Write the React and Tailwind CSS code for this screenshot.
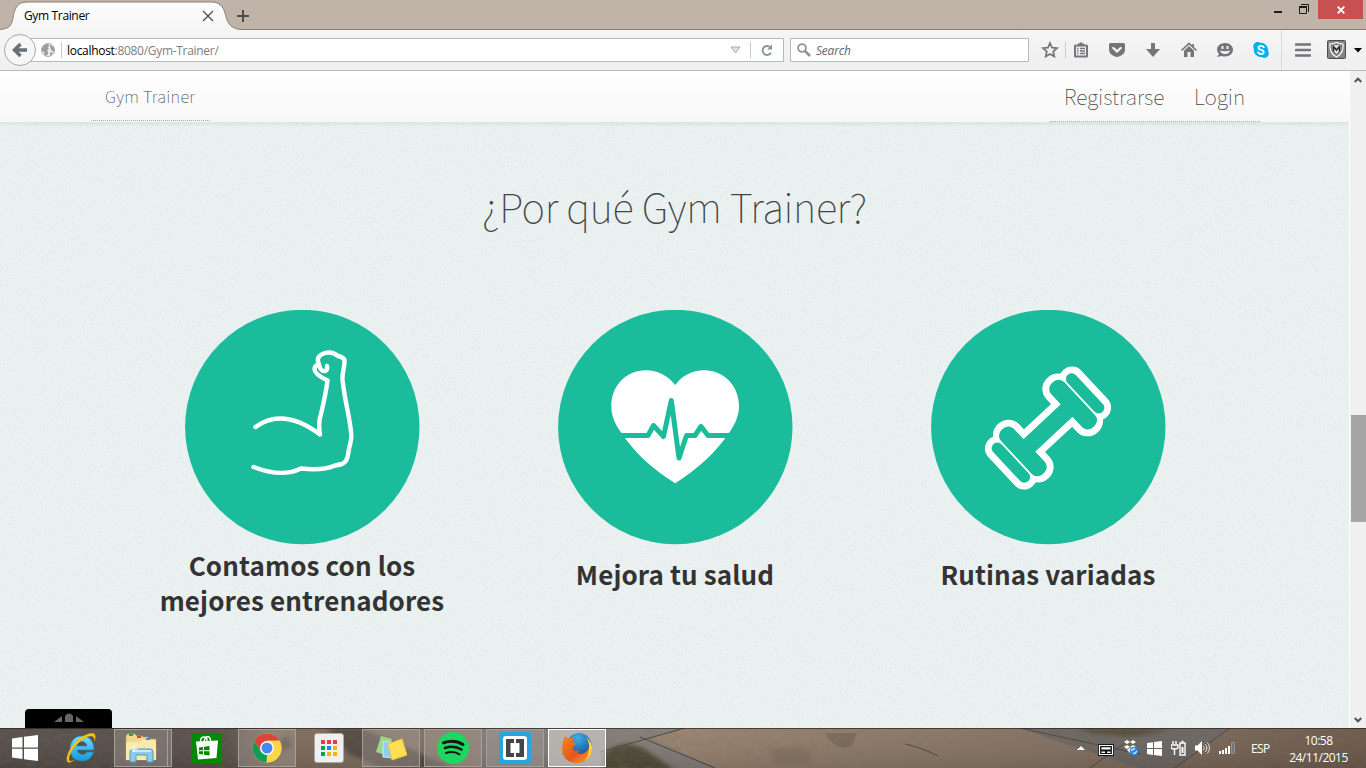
import React from "react";

const ui = "font-['Open_Sans','Noto_Sans',sans-serif]";
const body = "font-['Noto_Sans_CJK_SC','Source_Sans_Pro',sans-serif]";

function TitleBar() {
  return (
    <header className="relative flex h-[30px] shrink-0 items-start justify-between bg-[#c0b3a7] shadow-[inset_0_-1px_0_#857b73]">
      <div className="relative flex h-[30px] w-[260px] items-center">
        <svg className="absolute left-0 top-0" width="242" height="30" viewBox="0 0 242 30">
          <defs>
            <linearGradient id="tab" x1="0" y1="0" x2="0" y2="1">
              <stop offset="0" stopColor="#fdfdfd" />
              <stop offset="1" stopColor="#f5f5f5" />
            </linearGradient>
          </defs>
          <path d="M0 29.5C14 28.5 12 20 14 13C16 5 20 2 28 2H211C219 2 223 6 225 13C227 20 228 28.500 241 29.500V30H0Z" fill="url(#tab)" />
          <path d="M0 29.500C14 28.500 12 20 14 13C16 5 20 2 28 2H211C219 2 223 6 225 13C227 20 228 28.500 241 29.500" fill="none" stroke="#8a8179" />
        </svg>
        <span className={`relative ml-6 mt-[2px] w-[178px] whitespace-nowrap text-[12px] leading-4 tracking-[-0.35px] text-black ${ui}`}>Gym Trainer</span>
        <svg className="relative mt-[2px]" width="12" height="12" viewBox="0 0 12 12"><path d="M1 1L11 11M11 1L1 11" stroke="#4c4c4c" strokeWidth="1.300" /></svg>
        <svg className="relative ml-[23px] mt-[2px] shrink-0" width="12" height="12" viewBox="0 0 12 12"><path d="M6 0V12M0 6H12" stroke="#4c4c4c" strokeWidth="1.900" /></svg>
      </div>
      <div className="flex items-start">
        <svg width="44" height="20" viewBox="0 0 44 20">
          <path d="M0 11H8V13H0Z" fill="#1c1c1c" />
          <path d="M25.500 6.500H32.500V13.500H25.500ZM27 4.500H34.500V12" fill="none" stroke="#1c1c1c" />
          <path d="M25 7H33" stroke="#1c1c1c" strokeWidth="2" />
        </svg>
        <div className="mr-[3px] flex h-[19px] w-[45px] items-center justify-center bg-[#c75050]">
          <svg width="8" height="8" viewBox="0 0 8 8"><path d="M.7.7L7.300 7.300M7.300.7L.7 7.300" stroke="#fff" strokeWidth="1.900" /></svg>
        </div>
      </div>
    </header>
  );
}

const g = "#72767a";
const toolIcons = [
  <svg key="star" width="18" height="18" viewBox="0 0 18 18"><path d="M9 2L11 6.700L16 7.200L12.200 10.500L13.300 15.500L9 13L4.700 15.500L5.800 10.500L2 7.200L7 6.700Z" fill="none" stroke={g} strokeWidth="1.700" /></svg>,
  <svg key="list" width="18" height="18" viewBox="0 0 18 18"><path d="M3.500 4.500H14.500Q15 4.500 15 5V15Q15 15.500 14.500 15.500H3.500Q3 15.500 3 15V5Q3 4.500 3.500 4.500Z" fill="none" stroke={g} strokeWidth="2" /><path d="M6 4V2.500H7.500L8 1.500H10L10.500 2.500H12V4Z" fill={g} /><path d="M5 7.500H6.500M8 7.500H13M5 10H6.500M8 10H13M5 12.500H6.500M8 12.500H13" stroke={g} strokeWidth="1.400" /></svg>,
  <svg key="pocket" width="18" height="18" viewBox="0 0 18 18"><path d="M2.500 2H15.500Q17 2 17 3.500V8Q17 12 14 14T9 16Q7 16 4 14T1 8V3.500Q1 2 2.500 2Z" fill={g} /><path d="M5.300 7L9 10.400L12.700 7" fill="none" stroke="#f4f4f4" strokeWidth="2.300" strokeLinecap="round" /></svg>,
  <svg key="down" width="18" height="18" viewBox="0 0 18 18"><path d="M7 2H11V8H16L9 16L2 8H7Z" fill={g} /></svg>,
  <svg key="home" width="18" height="18" viewBox="0 0 18 18"><path d="M1.500 9.500L9 2.500L16.500 9.500M13 3V6" fill="none" stroke={g} strokeWidth="1.700" /><path d="M4 9.700L9 5L14 9.700V16H10.500V11H7.500V16H4Z" fill={g} /></svg>,
  <svg key="chat" width="18" height="18" viewBox="0 0 18 18"><path d="M9 2C13.500 2 17 4.800 17 8.800S13.500 15.500 9 15.500Q7 15.500 5.500 15L1 16L3 13Q1 11 1 8.800C1 4.800 4.500 2 9 2Z" fill={g} /><path d="M6.500 5V8M11.500 5V8" stroke="#f3f3f3" strokeWidth="1.900" /><path d="M4 9.500Q9 11 14 9.500Q13 13 9 13T4 9.500Z" fill="#f3f3f3" /></svg>,
  <svg key="skype" width="18" height="18" viewBox="0 0 18 18"><circle cx="9" cy="9" r="7.200" fill="#00aff0" /><circle cx="5.600" cy="5.500" r="4.400" fill="#00aff0" /><circle cx="12.400" cy="12.500" r="4.400" fill="#00aff0" /><path d="M11.800 6.300Q11 4.900 9 4.900Q6.500 4.900 6.500 6.700Q6.500 8.300 9 8.800T11.800 11Q11.800 13 9 13Q6.900 13 6.100 11.400" fill="none" stroke="#fff" strokeWidth="1.800" strokeLinecap="round" /></svg>,
];

function ToolBar() {
  return (
    <div className="flex h-[41px] shrink-0 items-center border-b border-[#b9b9b9] bg-linear-to-b from-[#f5f5f5] to-[#efefef]">
      <div className="relative z-10 ml-1 flex size-8 shrink-0 items-center justify-center rounded-full border border-[#a8a8a8] bg-[#f7f7f7]">
        <svg width="16" height="16" viewBox="0 0 16 16"><path d="M8.500 2L2.500 8L8.500 14M3 8H15" fill="none" stroke="#6b7075" strokeWidth="3.500" /></svg>
      </div>
      <div className="-ml-[6px] flex h-6 w-[754px] shrink-0 items-center border border-[#b1bcc8] bg-white">
        <svg className="ml-[10px]" width="14" height="14" viewBox="0 0 14 14"><circle cx="7" cy="7" r="6.500" fill="#f1f1f1" stroke="#a9a9a9" /><path d="M1 5Q3 1 7 1L8.500 3L6.500 4.500L8 6L6 7.500L7.500 10L5.500 13L3 11L3.500 9L1 8ZM9 1.500L13 4.500V9L11 8L9.500 5.500ZM9 9L12 10L9 13Z" fill="#9c9c9c" /></svg>
        <span className="ml-[6px] h-4 w-px bg-[#c9c9c9]" />
        <span className={`ml-[5px] mt-[2px] grow whitespace-nowrap text-[12px] leading-4 tracking-[-0.3px] text-[#7e7e7e] ${ui}`}><span className="text-black">localhost</span>:8080/Gym-Trainer/</span>
        <svg className="mr-px" width="11" height="8" viewBox="0 0 11 8"><path d="M1 1H10L5.500 7Z" fill="#dde3e9" stroke="#a1abb5" /></svg>
        <span className="ml-2 h-4 w-px bg-[#c9c9c9]" />
        <svg className="ml-[9px] mr-[9px]" width="14" height="14" viewBox="0 0 14 14"><path d="M11 9.700A4.500 4.500 0 1 1 10.200 4.200" fill="none" stroke="#8695a4" strokeWidth="1.900" /><path d="M7.200 6.500H12V1.500Z" fill="#8695a4" /></svg>
      </div>
      <div className="ml-[6px] flex h-6 w-[239px] shrink-0 items-center border border-[#b1bcc8] bg-white">
        <svg className="ml-[6px]" width="14" height="14" viewBox="0 0 14 14"><circle cx="5" cy="5" r="3.900" fill="none" stroke="#929292" strokeWidth="1.800" /><path d="M8 8L13 13" stroke="#929292" strokeWidth="2.500" /></svg>
        <span className={`ml-[5px] mt-[2px] text-[12px] italic leading-4 tracking-[-0.2px] text-[#666] ${ui}`}>Search</span>
      </div>
      <div className="ml-3 flex items-center">
        {toolIcons[0]}
        <span className="mx-[6px] h-4 w-px bg-[#c9c9c9]" />
        <div className="flex items-center gap-[18px]">{toolIcons.slice(1)}</div>
      </div>
      <span className="ml-[11px] h-[38px] w-px bg-[#dadada]" />
      <svg className="ml-[13px]" width="16" height="14" viewBox="0 0 16 14"><path d="M1 1.500H15M1 7H15M1 12.500H15" stroke={g} strokeWidth="2.700" strokeLinecap="round" /></svg>
      <svg className="ml-4" width="20" height="20" viewBox="0 0 20 20"><rect x=".5" y=".5" width="18" height="18" rx="1" fill="#858585" stroke="#4e4e4e" /><path d="M3 4Q6.500 4 9.500 2.500Q12.500 4 16 4Q17 13 9.500 17Q2 13 3 4Z" fill="#777" stroke="#fff" strokeWidth="1.200" /><path d="M5.500 5H13.500V10L9.500 14L5.500 10Z" fill="#ddd" /><path d="M6.500 11.500V6.500L9.500 10L12.500 6.500V11.500" fill="none" stroke="#2a2a2a" strokeWidth="1.500" /></svg>
      <svg className="ml-[7px]" width="8" height="5" viewBox="0 0 8 5"><path d="M0 0H8L4 4.500Z" fill="#000" /></svg>
    </div>
  );
}

function Paper() {
  return (
    <svg className="absolute inset-0" width="1349" height="657">
      <filter id="paper" x="0" y="0" width="100%" height="100%">
        <feTurbulence type="fractalNoise" baseFrequency="0.550" numOctaves="2" seed="4" />
        <feColorMatrix values="0 0 0 0 .46  0 0 0 0 .53  0 0 0 0 .53  .32 0 0 0 -.11" />
      </filter>
      <rect width="1349" height="657" filter="url(#paper)" opacity=".8" />
    </svg>
  );
}

function Feature({ title, lines, children }) {
  return (
    <article className="flex w-[373px] flex-col items-center">
      <svg width="235" height="235" viewBox="5 5 235 235">
        <circle cx="122.300" cy="122" r="117.200" fill="#1bbc9b" />
        {children}
      </svg>
      <h3 className={`whitespace-nowrap text-center text-[26px] font-bold leading-[35px] tracking-[0.12px] text-[#333] ${body} ${lines ? "mt-[2px]" : "mt-[11px]"}`}>
        {title.map((t) => <span key={t} className="block">{t}</span>)}
      </h3>
    </article>
  );
}

function Dumbbell() {
  return (
    <g transform="translate(122 123) rotate(47)">
      <g fill="#fff">
        <rect x="-15.500" y="-30" width="31" height="60" />
        <rect x="-32" y="-63.500" width="64" height="25.500" rx="12.500" />
        <rect x="-32" y="38" width="64" height="25.500" rx="12.500" />
        <rect x="-37" y="-49" width="74" height="30.500" rx="14.700" />
        <rect x="-37" y="18.500" width="74" height="30.500" rx="14.700" />
      </g>
      <g fill="#1bbc9b">
        <rect x="-8.600" y="-30" width="17.200" height="60" />
        <rect x="-25.400" y="-56.500" width="50.800" height="11.500" rx="5.500" />
        <rect x="-25.400" y="45" width="50.800" height="11.500" rx="5.500" />
        <rect x="-30.200" y="-43.200" width="60.400" height="17.700" rx="7.700" />
        <rect x="-30.200" y="25.500" width="60.400" height="17.700" rx="7.700" />
      </g>
    </g>
  );
}

function Page() {
  return (
    <main className="relative w-[1349px] shrink-0 overflow-hidden bg-[#ecf2f2]">
      <Paper />
      <nav className="relative flex h-[52px] justify-between border-b border-[#e2e5e5] bg-linear-to-b from-white to-[#f7f7f7] pl-[91px] pr-[89px] shadow-[0_1px_4px_rgba(0,0,0,0.08)]">
        <a className={`h-[50px] w-[119px] whitespace-nowrap border-b border-dotted border-[#aaa] pl-[14px] text-[16.500px] font-thin leading-[50px] tracking-[0.25px] text-[#444] ${body}`}>Gym Trainer</a>
        <div className={`flex h-[51px] w-[210px] whitespace-nowrap border-b border-dotted border-[#aaa] pl-[14px] text-[21px] font-thin leading-[51px] text-[#444] ${body}`}>
          <a className="w-[130px]">Registrarse</a>
          <a>Login</a>
        </div>
      </nav>
      <section className="relative flex flex-col items-center">
        <h1 className={`mt-[53px] h-[60px] whitespace-nowrap text-[40px] font-thin leading-[60px] tracking-[-0.35px] text-[#444] ${body}`}>¿Por qué Gym Trainer?</h1>
        <div className="ml-px mt-[74px] flex">
          <Feature title={["Contamos con los", "mejores entrenadores"]} lines>
            <g fill="none" stroke="#fff" strokeWidth="4.400" strokeLinecap="round" strokeLinejoin="round">
              <path d="M75.500 122Q103 102 140 129.500Q138 117 141 109Q146 88 147.500 75.500Q134 69 134.500 64Q135 60 139 59.500Q135 51 145 48Q152 46 158 51Q163 52 164.500 55C165 62 162 67 162.500 75C165 98 170 112 171.300 130C171.800 136 168.500 143 168 150Q167 157 162 159Q158 160 155 160.500Q143 166 121 163.500Q102 173 73.500 162" />
              <path d="M139 60Q141 67 145 66Q148 65 147 61" />
            </g>
          </Feature>
          <Feature title={["Mejora tu salud"]}>
            <path d="M122.200 80C129 71 139 65.300 151 65.300C171 65.300 186 81 186 101C186 111 182 119 176 128C163 147 145 164 122.200 178.300C99 164 81 147 68.500 128C62 119 58.300 111 58.300 101C58.300 81 73 65.300 93 65.300C105 65.300 115 71 122.200 80Z" fill="#fff" />
            <path d="M58 130.500H95L100.500 120.500L110.500 131.500L118.300 95.500L126 153L133.500 130.500H142L148 121.500L155 130.500H188" fill="none" stroke="#1bbc9b" strokeWidth="5" strokeLinejoin="round" />
          </Feature>
          <Feature title={["Rutinas variadas"]}><Dumbbell /></Feature>
        </div>
      </section>
      <div className="absolute bottom-0 left-[25px] flex h-[19px] w-[87px] items-center justify-center rounded-t-[4px] bg-black">
        <svg className="mb-[2px]" width="30" height="10" viewBox="0 0 30 10"><path d="M8 3V9H0ZM22 3V9H30ZM11 3L13 1Q15 0 17 1L19 3V9H11Z" fill="#666" /></svg>
      </div>
    </main>
  );
}

function ScrollBar() {
  return (
    <aside className="flex w-[17px] flex-col items-center border-l border-white bg-[#f0f0f0]">
      <svg className="mt-[6px]" width="8" height="6" viewBox="0 0 8 6"><path d="M.7 5L4 1.700L7.300 5" fill="none" stroke="#555" strokeWidth="2" /></svg>
      <div className="mt-[332px] h-[107px] w-[15px] bg-[#a6a6a6]" />
      <svg className="mb-[5px] mt-auto" width="8" height="6" viewBox="0 0 8 6"><path d="M.7 1L4 4.300L7.300 1" fill="none" stroke="#555" strokeWidth="2" /></svg>
    </aside>
  );
}

function Ground() {
  return (
    <svg className="absolute inset-0" width="1366" height="40" viewBox="0 0 1366 40">
      <defs>
        <linearGradient id="ground">
          <stop offset="0" stopColor="#514b47" /><stop offset=".165" stopColor="#554d48" /><stop offset=".2" stopColor="#7b6858" />
          <stop offset=".3" stopColor="#7d6f62" /><stop offset=".5" stopColor="#95816d" /><stop offset=".62" stopColor="#8b7968" /><stop offset=".78" stopColor="#806e60" /><stop offset="1" stopColor="#685648" />
        </linearGradient>
        <linearGradient id="shade" x1="0" y1="0" x2="0" y2="1"><stop offset="0" stopColor="#eddcc6" stopOpacity=".05" /><stop offset="1" stopColor="#222" stopOpacity=".13" /></linearGradient>
        <filter id="soft"><feGaussianBlur stdDeviation="2" /></filter>
        <filter id="grain" x="0" y="0" width="100%" height="100%"><feTurbulence type="fractalNoise" baseFrequency=".11 .2" numOctaves="3" seed="9" /><feColorMatrix values="0 0 0 0 .2  0 0 0 0 .15  0 0 0 0 .1  .8 0 0 0 -.3" /></filter>
      </defs>
      <rect width="1366" height="40" fill="url(#ground)" />
      <path d="M326 0H362L425 28L455 40H382L349 26Z" fill="#4f4640" filter="url(#soft)" />
      <path d="M480 0H685L652 10L715 40H480Z" fill="#817b77" />
      <path d="M1020 0H1230L1175 40H1140L1066 16Z" fill="#686360" />
      <path d="M603 26Q622 10 643 20L675 42H603Z" fill="#4b4a36" filter="url(#soft)" />
      <path d="M1075 0H1170Q1140 12 1108 7Q1090 7 1075 0Z" fill="#504a39" filter="url(#soft)" />
      <path d="M825 5H857L852 18L842 20Q830 16 825 5Z" fill="#6b5c4b" opacity=".6" />
      <path d="M768 22Q795 14 812 25L808 36H775Z" fill="#6e5e4e" opacity=".35" filter="url(#soft)" />
      <path d="M640 9L715 40M685 0L600 24M1020 0L1140 26M1230 0L1175 40M1090 40L1125 15M905 16Q920 19 938 28" stroke="#49403b" fill="none" />
      <path d="M281 12L289 5L287 13L293 10L290 17L294 22L287 20L281 25Z" fill="#4b433c" filter="url(#soft)" />
      <rect width="1366" height="40" fill="url(#shade)" />
      <rect width="1366" height="40" filter="url(#grain)" opacity=".5" />
    </svg>
  );
}

function Task({ w = "w-[58px]", active, plain, children }) {
  const look = plain ? "" : active ? "border border-white bg-[#dedede]/55" : "border border-[#a6a09b] bg-[#a9a39e]/40";
  return <div className={`flex h-[38px] shrink-0 items-center justify-center ${w} ${look}`}>{children}</div>;
}

function TaskBar() {
  const dots = ["#ef3d35", "#ef3d35", "#ef3d35", "#0f9d58", "#1887f0", "#fbb013", "#0f9d58", "#fbb013", "#fbb013"];
  return (
    <footer className="relative flex h-10 shrink-0 overflow-hidden bg-[#6a5d53] text-white">
      <Ground />
      <div className="relative flex grow items-center shadow-[inset_0_1px_0_rgba(40,35,32,0.7)]">
        <Task plain w="w-[50px]"><svg width="26" height="26" viewBox="0 0 26 26"><path d="M0 3.500L10.500 2V12.400H0ZM12 1.800L26 0V12.400H12ZM0 13.700H10.500V24L0 22.500ZM12 13.700H26V26L12 24.300Z" fill="#fff" /></svg></Task>
        <Task plain w="w-[62px]">
          <svg width="32" height="32" viewBox="0 0 32 32">
            <defs><linearGradient id="ie" x1="0" y1="0" x2="0" y2="1"><stop offset="0" stopColor="#7ddcff" /><stop offset=".5" stopColor="#43b9ec" /><stop offset="1" stopColor="#159bd9" /></linearGradient></defs>
            <path d="M17 4C24 4 29 9 29 18H12C13 23 20 24 22 20H28.500C26 27 22 29 17 29C9 29 5 24 5 17S9 4 17 4ZM12 14H22C21 8 13 8 12 14Z" fill="url(#ie)" stroke="#1884b8" strokeWidth=".6" />
            <path d="M9 28C4 32 1 31 2 25C4 16 13 5 23 2C29 0 32 2 29.500 9C29.500 4 27 3 22 5C12 9 5 20 4 26C3.500 30 6 29.500 9 28Z" fill="#ffc814" stroke="#d99a05" strokeWidth=".4" />
          </svg>
        </Task>
        <div className="ml-[2px] flex">
          <Task w="w-[54px]">
            <svg width="32" height="30" viewBox="0 0 32 30">
              <path d="M1 4Q1 1 3 1H10L12 3H17L18 4H23L24 6H31V27H1Z" fill="#f0d98a" stroke="#b79744" strokeWidth=".7" />
              <path d="M4 1H8V3H4Z" fill="#18b232" /><path d="M12 3H16V5H12Z" fill="#d64532" /><path d="M21 5H25V7H21Z" fill="#348de5" />
              <path d="M1 9H15L17 7H31V27H1Z" fill="#fae9ad" /><path d="M5 29V19Q5 16 8 16H25Q28 16 28 19V29H22V22H11V29Z" fill="#8dcbe9" stroke="#4b99c2" />
              <path d="M7 18H26" stroke="#dff5ff" strokeWidth="1.500" /><path d="M9 12V19M5 16H13" stroke="#fff" />
            </svg>
          </Task>
          <div className="h-[38px] w-1 border border-l-0 border-[#a6a09b] bg-[#a9a39e]/40" />
        </div>
        <Task plain w="w-[66px]">
          <svg className="ml-1" width="30" height="30" viewBox="0 0 30 30"><path d="M0 0H30V30H0Z" fill="#008a00" /><path d="M4 8.500L26 7.500L24.500 25L6 26.500Z" fill="#fff" /><path d="M8.500 9V7.500Q9 4 12 4T15 7V9M12 9Q13 3.500 16 3.500Q19 4 18.500 11" fill="none" stroke="#fff" strokeWidth="1.400" /><path d="M7 14.500L11 14V17.300H7ZM12 13.800L17.500 13V17.300H12ZM7 18.300H11V21.500L7 21ZM12 18.300H17.500V22.500L12 21.700Z" fill="#008a00" /></svg>
        </Task>
        <Task w="w-[58px]">
          <svg width="30" height="30" viewBox="0 0 30 30"><circle cx="15" cy="15" r="14.500" fill="#ffd447" /><path d="M2.400 7.800A14.500 14.500 0 0 1 27.600 7.800H15L8.800 18.600Z" fill="#dc4437" /><path d="M2.400 7.800L8.800 18.600L15 22L14.500 29.500A14.500 14.500 0 0 1 2.400 7.800Z" fill="#109d58" /><path d="M27.500 7.800H15L21.200 18.700L14.500 29.500A14.500 14.500 0 0 0 27.500 7.800Z" fill="#ffd447" /><circle cx="15" cy="15" r="7" fill="#fff" /><circle cx="15" cy="15" r="5.500" fill="#4587f3" /></svg>
        </Task>
        <Task plain w="w-[66px]">
          <div className="grid size-[30px] grid-cols-[repeat(3,4px)] content-center justify-center gap-[2px] rounded-[3px] border border-[#aaa] bg-[#efefef]">
            {dots.map((c, i) => <span key={i} className="h-1 w-1" style={{ background: c }} />)}
          </div>
        </Task>
        <div className="flex gap-1">
          <Task><svg width="32" height="26" viewBox="0 0 32 26"><path d="M6 1L17 4L13 21L1 17Z" fill="#9bd785" /><path d="M8 6L20 8L17 23L8 22Z" fill="#91cdf4" stroke="#c2e9ff" /><path d="M13 9L27 4L32 20L17 25Z" fill="#ffdf55" stroke="#f3c52b" /></svg></Task>
          <Task><svg width="32" height="32" viewBox="0 0 32 32"><circle cx="16" cy="16" r="16" fill="#1ed760" /><g fill="none" stroke="#151515" strokeLinecap="round"><path d="M6.500 10.800Q17 7 26 12.500" strokeWidth="3" /><path d="M8 16Q17 13 24.500 17.500" strokeWidth="2.500" /><path d="M9 21Q16 18.500 22.500 22.300" strokeWidth="2" /></g></svg></Task>
          <Task><svg width="32" height="32" viewBox="0 0 32 32"><rect width="32" height="32" rx="2" fill="#27a5e1" /><rect x="4" y="4" width="24" height="24" rx="3" fill="#fff" /><path d="M7 7H15V11H11.500V21H15V25H7ZM17 7H25V25H17V21H20.500V11H17Z" fill="#454545" /></svg></Task>
          <Task active>
            <svg width="32" height="32" viewBox="0 0 32 32">
              <defs>
                <linearGradient id="fox" x1="0" y1="0" x2="1" y2="1"><stop offset="0" stopColor="#f68a22" /><stop offset=".55" stopColor="#e2561c" /><stop offset="1" stopColor="#f9a826" /></linearGradient>
                <radialGradient id="globe" cx=".45" cy=".2" r=".8"><stop offset="0" stopColor="#3fb0e4" /><stop offset="1" stopColor="#0c4b8c" /></radialGradient>
              </defs>
              <circle cx="18" cy="13.500" r="12.500" fill="url(#globe)" />
              <path d="M4 4L8 7Q10 5 14 5Q11 8 12 10L15.500 12L12 14.500Q11 18 14 19Q17 18 18 19Q15 22 20 22Q26 21 28 15Q28.500 10 25 5Q31 10 31 17C31 26 24 31 16 31C7 31 1 25 1 17Q1 11 4 4Z" fill="url(#fox)" />
              <path d="M25 5Q32 11 31 18Q30 25 24 29Q28 23 28 16Q28.500 10 25 5Z" fill="#ffd23d" />
            </svg>
          </Task>
        </div>
        <div className="ml-auto flex items-center">
          <svg width="8" height="6" viewBox="0 0 8 6"><path d="M0 5L4 1L8 5Z" fill="#fff" /></svg>
          <svg className="ml-[13px] mt-1" width="16" height="14" viewBox="0 0 16 14"><path d="M0 1H16V13H0Z" fill="#111" /><path d="M1.500 2.500H14.500V11.500H1.500Z" fill="#111" stroke="#fff" strokeWidth="1.200" /><path d="M3.500 4.200H12.500V6.500H3.500ZM3.500 8.500H7V10H3.500ZM9 8.500H12.500V10H9Z" fill="#fff" /></svg>
          <svg className="ml-[9px]" width="16" height="16" viewBox="0 0 16 16"><path d="M4 0L7 2L4 4L1 2ZM10 0L13 2L10 4L7 2ZM4 5L7 7L4 9L1 7ZM10 5L13 7L10 9L7 7ZM4 10L7 8L10 10L7 13Z" fill="#fff" /><circle cx="11" cy="11" r="4.300" fill="#208be5" /><path d="M8.500 11Q9 8.500 12 9M13.500 11Q13 14 10 13" fill="none" stroke="#fff" strokeWidth="1.200" /></svg>
          <svg className="ml-2" width="15" height="15" viewBox="0 0 15 15"><path d="M0 2L6 1.200V7H0ZM7 1L15 0V7H7ZM0 8H6V14L0 13ZM7 8H15V15L7 14Z" fill="#fff" /></svg>
          <svg className="ml-[9px]" width="15" height="16" viewBox="0 0 15 16"><path d="M2 1V4M5 1V4M0 5H7V7Q7 9 3.500 9Q0 9 0 7ZM3.500 9V15M9 3H14V15H9ZM10.500 1.500H12.500" fill="none" stroke="#fff" strokeWidth="1.400" /><path d="M10.500 7H12.500V13H10.500Z" fill="#fff" /></svg>
          <svg className="ml-[9px]" width="15" height="14" viewBox="0 0 15 14"><path d="M0 4.500H2.500L7 0V14L2.500 9.500H0Z" fill="#fff" /><path d="M8.500 5Q10 7 8.500 9M10.500 3Q13.500 7 10.500 11M12.500 1.500Q16.500 7 12.500 12.500" fill="none" stroke="#ddd" /></svg>
          <svg className="ml-[9px]" width="16" height="12" viewBox="0 0 16 12"><path d="M0 9H2V12H0ZM3 8H5V12H3ZM6 6H8V12H6ZM9 4H11V12H9Z" fill="#fff" /><path d="M12.500 .5H15.500V11.500H12.500Z" fill="#777" stroke="#aaa" strokeWidth=".6" /></svg>
          <span className={`ml-4 mt-[2px] w-[20px] whitespace-nowrap text-[12px] tracking-[-0.6px] ${ui}`}>ESP</span>
          <div className={`ml-[15px] mr-[15px] mt-[2px] flex w-[65px] flex-col items-center text-[12px] leading-[17px] tracking-[-0.5px] ${ui}`}>
            <span>10:58</span>
            <span>24/11/2015</span>
          </div>
        </div>
      </div>
    </footer>
  );
}

export default function App() {
  return (
    <div className="flex h-[768px] w-[1366px] flex-col overflow-hidden bg-white">
      <TitleBar />
      <ToolBar />
      <div className="flex h-[657px] shrink-0">
        <Page />
        <ScrollBar />
      </div>
      <TaskBar />
    </div>
  );
}
